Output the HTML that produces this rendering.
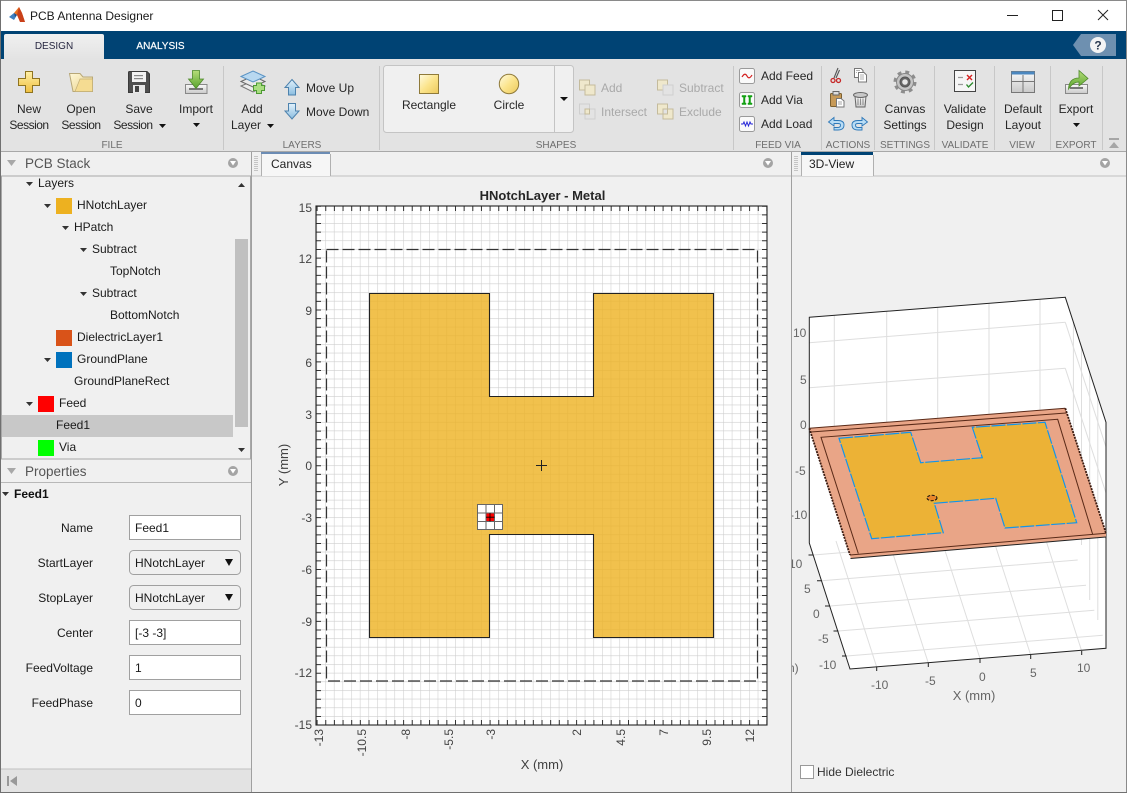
<!DOCTYPE html>
<html><head><meta charset="utf-8"><title>PCB Antenna Designer</title>
<style>
html,body{margin:0;padding:0;background:#f0f0f0;overflow:hidden}
svg{display:block;font-family:"Liberation Sans",Arial,sans-serif;font-size:12px}
.r{font-size:12px;fill:#262626;text-anchor:middle}
.ss{letter-spacing:-.5px}
.l{font-size:12px;fill:#262626}
.d{font-size:12px;fill:#a9a9a9}
.s{font-size:10px;fill:#6e6e6e;text-anchor:middle}
.t{fill:#1a1a1a}
.p{fill:#1a1a1a;text-anchor:end}
.v{fill:#1a1a1a}
.h{font-size:13.5px;fill:#555}
.a{fill:#444;text-anchor:end}
.x{fill:#444;text-anchor:end}
.z{fill:#666}
.sep{stroke:#c8c8c8;stroke-width:1}
</style></head><body>
<svg width="1127" height="793" viewBox="0 0 1127 793" xmlns="http://www.w3.org/2000/svg">
<defs>
<linearGradient id="gy" x1="0" y1="0" x2="1" y2="1"><stop offset="0" stop-color="#fffbe0"/><stop offset=".5" stop-color="#fbe48c"/><stop offset="1" stop-color="#ecc95c"/></linearGradient>
<linearGradient id="gp" x1="0" y1="0" x2="0" y2="1"><stop offset="0" stop-color="#fff0a8"/><stop offset="1" stop-color="#f0bf40"/></linearGradient>
<linearGradient id="gf" x1="0" y1="0" x2="1" y2="1"><stop offset="0" stop-color="#fff8d8"/><stop offset="1" stop-color="#e8cf85"/></linearGradient>
<linearGradient id="gg" x1="0" y1="0" x2="0" y2="1"><stop offset="0" stop-color="#b6dd7a"/><stop offset="1" stop-color="#58a32c"/></linearGradient>
<linearGradient id="gb" x1="0" y1="0" x2="0" y2="1"><stop offset="0" stop-color="#e2f1fb"/><stop offset="1" stop-color="#8bbde0"/></linearGradient>
<linearGradient id="gt" x1="0" y1="0" x2="0" y2="1"><stop offset="0" stop-color="#fafafa"/><stop offset="1" stop-color="#c9c9c9"/></linearGradient>
<linearGradient id="gtab" x1="0" y1="0" x2="0" y2="1"><stop offset="0" stop-color="#f0f0f0"/><stop offset="1" stop-color="#e3e3e3"/></linearGradient>
<pattern id="grid" patternUnits="userSpaceOnUse" x="316.6" y="205.7" width="8.65" height="8.65">
<path d="M0 0V8.65M0 0H8.65" stroke="#cdcdcd" stroke-width="1.100" fill="none"/>
</pattern>
<clipPath id="rv"><rect x="792" y="176" width="334" height="616"/></clipPath>
</defs>

<!-- window -->
<rect width="1127" height="793" fill="#f0f0f0"/>
<rect width="1127" height="31" fill="#fff"/>
<rect y="0" width="1127" height="1" fill="#8a8a8a"/>

<!-- logo -->
<polygon points="9,17 14,13 17,15 14,20" fill="#3d7fc0"/>
<polygon points="14,13 19,7 22,13 25,22 21,18 17,15" fill="#e8701e"/>
<polygon points="19,7 17,15 20,22 25,22 22,13" fill="#c9401a"/>
<polygon points="14,13 17,15 15,17" fill="#1e4f8a"/>
<text x="30" y="20" style="fill:#1a1a1a">PCB Antenna Designer</text>

<!-- window controls -->
<rect x="1007" y="15" width="11" height="1" fill="#222"/>
<rect x="1052.500" y="10.500" width="10" height="10" fill="none" stroke="#222"/>
<path d="M1098 10L1108 20M1108 10L1098 20" stroke="#222" fill="none"/>

<!-- blue strip -->
<rect y="31" width="1127" height="28" fill="#004374"/>
<path d="M4 59V36Q4 34 6 34H102Q104 34 104 36V59Z" fill="url(#gtab)"/>
<text x="54" y="49" text-anchor="middle" style="font-size:10px;fill:#262640">DESIGN</text>
<text x="160.500" y="49" text-anchor="middle" style="font-size:10px;fill:#fff;stroke:#fff;stroke-width:.2">ANALYSIS</text>
<polygon points="1073,45 1081,34 1116,34 1116,56 1081,56" fill="#6e90b0"/>
<circle cx="1098" cy="45" r="8" fill="#f4f4f4"/>
<text x="1098" y="49.500" text-anchor="middle" style="font-size:12px;font-weight:bold;fill:#2a3a50">?</text>

<!-- ribbon -->
<rect y="59" width="1127" height="92" fill="#e3e3e3"/>
<rect y="151" width="1127" height="1" fill="#a8a8a8"/>
<g class="sep">
<line x1="223.500" y1="66" x2="223.500" y2="150"/><line x1="379.500" y1="66" x2="379.500" y2="150"/>
<line x1="733.500" y1="66" x2="733.500" y2="150"/><line x1="821.500" y1="66" x2="821.500" y2="150"/>
<line x1="874.500" y1="66" x2="874.500" y2="150"/><line x1="934.500" y1="66" x2="934.500" y2="150"/>
<line x1="994.500" y1="66" x2="994.500" y2="150"/><line x1="1050.500" y1="66" x2="1050.500" y2="150"/>
<line x1="1102.500" y1="66" x2="1102.500" y2="150"/>
</g>

<!-- ribbon labels -->
<text class="r" x="29" y="113">New</text><text class="r ss" x="29" y="129">Session</text>
<text class="r" x="81" y="113">Open</text><text class="r ss" x="81" y="129">Session</text>
<text class="r" x="139" y="113">Save</text><text class="r ss" x="133" y="129">Session</text>
<polygon points="159,124 166,124 162.500,128" fill="#111"/>
<text class="r" x="196" y="113">Import</text>
<polygon points="193,123 200,123 196.500,127" fill="#111"/>
<text class="r" x="252" y="113">Add</text><text class="r" x="246" y="129">Layer</text>
<polygon points="267,124 274,124 270.500,128" fill="#111"/>
<text class="l" x="306" y="92">Move Up</text><text class="l" x="306" y="116">Move Down</text>
<text class="s" x="112" y="148">FILE</text><text class="s" x="302" y="148">LAYERS</text>
<text class="s" x="556" y="148">SHAPES</text><text class="s" x="778" y="148">FEED VIA</text>
<text class="s" x="848" y="148">ACTIONS</text><text class="s" x="905" y="148">SETTINGS</text>
<text class="s" x="965" y="148">VALIDATE</text><text class="s" x="1022" y="148">VIEW</text>
<text class="s" x="1076" y="148">EXPORT</text>

<!-- New Session icon -->
<path d="M25.500 71.500H32.500V78.500H39.500V85.500H32.500V92.500H25.500V85.500H18.500V78.500H25.500Z" fill="url(#gp)" stroke="#8f7420"/>
<!-- Open icon -->
<path d="M69.500 73.500H80L83 77H92.500V91.500H73Z" fill="url(#gf)" stroke="#b8a878"/>
<path d="M80 79H92.500V91.500H75Z" fill="#f5dc92" stroke="#c2ae76" stroke-width=".7"/>
<!-- Save icon -->
<path d="M128.500 72.500Q128.500 71.500 129.500 71.500H147L149.500 74V92.500H128.500Z" fill="#4f4f4f" stroke="#3a3a3a"/>
<rect x="132" y="72" width="14" height="10" fill="#f2f2f2"/>
<rect x="134" y="75" width="9" height="1.200" fill="#888"/><rect x="134" y="78" width="9" height="1.200" fill="#888"/>
<rect x="133" y="85" width="12" height="8" fill="#e8e8e8"/><rect x="135" y="86" width="4" height="6" fill="#444"/>
<!-- Import icon -->
<path d="M185.500 84.500H207V93.500H185.500Z" fill="url(#gt)" stroke="#888"/>
<rect x="189" y="88" width="14" height="2" fill="#777"/>
<path d="M192.500 70.500H199.500V79H203.500L196 88.500L188.500 79H192.500Z" fill="url(#gg)" stroke="#4e8a2a" stroke-width=".8"/>
<!-- Add layer icon -->
<path d="M241 86L253 81L265 86L253 92Z" fill="#ececec" stroke="#777"/>
<path d="M241 81.500L253 76L265 81.500L253 87Z" fill="#e9e9e9" stroke="#666"/>
<path d="M241 76.500L253 71L265 76.500L253 82Z" fill="#b8d8f0" stroke="#5a93c4"/>
<path d="M256.500 83H261.500V85.500H264.500V90.500H261.500V93.500H256.500V90.500H253.500V85.500H256.500Z" fill="#a9dd80" stroke="#4d9a34"/>
<!-- Move arrows -->
<path d="M292 79.500L299 87.500H295.500V95H288.500V87.500H285Z" fill="url(#gb)" stroke="#4d82ad"/>
<path d="M288.500 103.500H295.500V111H299L292 119L285 111H288.500Z" fill="url(#gb)" stroke="#4d82ad"/>

<!-- Shapes gallery -->
<rect x="383.500" y="65.500" width="190" height="67" rx="3" fill="#f0f0f0" stroke="#c4c4c4"/>
<line x1="554.500" y1="66" x2="554.500" y2="132" stroke="#c4c4c4"/>
<rect x="419.500" y="74.500" width="19" height="19" fill="url(#gy)" stroke="#8f7a3a"/>
<circle cx="509" cy="84" r="9.700" fill="url(#gy)" stroke="#8f7a3a"/>
<text x="429" y="109" text-anchor="middle" class="l">Rectangle</text>
<text x="509" y="109" text-anchor="middle" class="l">Circle</text>
<polygon points="560,97 568,97 564,101" fill="#111"/>

<!-- disabled boolean ops -->
<g stroke="#c4bb9c" fill="#efe8cc">
<rect x="579.500" y="80" width="10" height="10"/><rect x="585" y="85" width="10" height="10"/>
<rect x="657.500" y="80" width="10" height="10"/><rect x="663" y="85" width="10" height="10" fill="#e3e3e3" stroke="#cfcfcf"/>
<rect x="579.500" y="104" width="10" height="10" fill="#e3e3e3" stroke="#cfcfcf"/><rect x="585" y="109" width="10" height="10" fill="#e3e3e3" stroke="#cfcfcf"/><rect x="585" y="109" width="4.500" height="5"/>
<rect x="657.500" y="104" width="10" height="10"/><rect x="663" y="109" width="10" height="10"/><rect x="663" y="109" width="4.500" height="5" fill="#e3e3e3"/>
</g>
<text class="d" x="601" y="92">Add</text><text class="d" x="601" y="116">Intersect</text>
<text class="d" x="679" y="92">Subtract</text><text class="d" x="679" y="116">Exclude</text>

<!-- Feed/via/load -->
<rect x="739.500" y="68.500" width="15" height="15" rx="2" fill="#fafafa" stroke="#9a9a9a"/>
<path d="M742 77Q745 72 747 76T752 75" fill="none" stroke="#d42020" stroke-width="1.200"/>
<rect x="739.500" y="92.500" width="15" height="15" rx="2" fill="#fafafa" stroke="#9a9a9a"/>
<path d="M742 95.500H746V97H745V103H746V104.500H742V103H743.500V97H742ZM748 95.500H752V97H750.500V103H752V104.500H748V103H749V97H748Z" fill="#12a012" stroke="#12a012" stroke-width=".5"/>
<rect x="739.500" y="116.500" width="15" height="15" rx="2" fill="#fafafa" stroke="#9a9a9a"/>
<path d="M741 124H743L744 122L745.500 126L747 122L748.500 126L750 122L751 124H753" fill="none" stroke="#2626d8" stroke-width="1"/>
<text class="l" x="761" y="80">Add Feed</text><text class="l" x="761" y="104">Add Via</text><text class="l" x="761" y="128">Add Load</text>

<!-- Actions -->
<path d="M838 68L834 78M839.500 70L836 78" stroke="#555" stroke-width="1.100" fill="none"/>
<circle cx="833" cy="80.500" r="2" fill="none" stroke="#c62828" stroke-width="1.300"/><circle cx="838.500" cy="80.500" r="2" fill="none" stroke="#c62828" stroke-width="1.300"/>
<path d="M854.500 68.500H861L863 70.500V77.500H854.500Z" fill="#fff" stroke="#777"/><path d="M858.500 72.500H864L866.500 75V82H858.500Z" fill="#fff" stroke="#777"/>
<path d="M856 70.500H860M856 72.500H857M860 75H864M860 77H864M860 79H864" stroke="#999" fill="none" stroke-width=".8"/>
<rect x="830.500" y="93.500" width="11" height="13" rx="1" fill="#c79a58" stroke="#7c6030"/><rect x="833" y="91.500" width="6" height="3.500" fill="#ddd" stroke="#666"/>
<path d="M836.500 98.500H841L844 101V107H836.500Z" fill="#fff" stroke="#777"/><path d="M838 102H842M838 104H842" stroke="#888" stroke-width=".8"/>
<path d="M855 96H866L865 107H856Z" fill="url(#gt)" stroke="#666"/><ellipse cx="860.500" cy="95" rx="7" ry="2.500" fill="#c8c8c8" stroke="#666"/>
<path d="M858 98.500V105M860.500 98.500V105M863 98.500V105" stroke="#777" stroke-width=".8"/>
<path d="M834 117.500V120.500H838Q844 120.500 844 125Q844 130 838 130H834V127.500H838Q840.500 127.500 840.500 125Q840.500 123.500 838 123.500H834V126L828.500 122Z" fill="#b8dcf5" stroke="#2e78b8" stroke-width=".9"/>
<path d="M862 117.500V120.500H858Q852 120.500 852 125Q852 130 858 130H862V127.500H858Q855.500 127.500 855.500 125Q855.500 123.500 858 123.500H862V126L867.500 122Z" fill="#b8dcf5" stroke="#2e78b8" stroke-width=".9"/>

<!-- Gear -->
<circle cx="905" cy="82" r="10" fill="none" stroke="#8d8d8d" stroke-width="3" stroke-dasharray="3.900 3.950"/>
<circle cx="905" cy="82" r="8.500" fill="#c4c4c4" stroke="#888"/>
<circle cx="905" cy="82" r="5" fill="#666" stroke="#555"/><circle cx="905" cy="82" r="2.800" fill="#e6e6e6"/>
<text class="r" x="905" y="113">Canvas</text><text class="r" x="905" y="129">Settings</text>

<!-- Validate -->
<rect x="954.500" y="70.500" width="21" height="21" fill="#f6f6f6" stroke="#444"/>
<path d="M958 77.500H963M958 84.500H963" stroke="#999" stroke-width="1.300"/>
<path d="M967 75L972 80M972 75L967 80" stroke="#d62020" stroke-width="1.400"/>
<path d="M966.500 84.500L968.500 87L973 82.500" stroke="#2e8b2e" stroke-width="1.400" fill="none"/>
<text class="r" x="965" y="113">Validate</text><text class="r" x="965" y="129">Design</text>

<!-- Layout -->
<rect x="1011.500" y="71.500" width="23" height="21" fill="url(#gt)" stroke="#777"/>
<rect x="1011.500" y="71.500" width="23" height="3" fill="#4c88c0"/>
<path d="M1012 81.500H1034M1023 75V92" stroke="#777"/>
<text class="r" x="1023" y="113">Default</text><text class="r" x="1023" y="129">Layout</text>

<!-- Export -->
<rect x="1065.500" y="84.500" width="22" height="9" fill="url(#gt)" stroke="#888"/>
<rect x="1070" y="87" width="13" height="2" fill="#777"/>
<path d="M1068.500 89Q1069 78 1079 78V70.500L1088 78.500L1079 86V82Q1073 82 1068.500 89Z" fill="url(#gg)" stroke="#4e8a2a" stroke-width=".8"/>
<text class="r" x="1076" y="113">Export</text>
<polygon points="1073,123 1080,123 1076.500,127" fill="#111"/>

<!-- collapse -->
<rect x="1109" y="138" width="10" height="2" fill="#a6a6a6"/><polygon points="1109,148 1119,148 1114,142" fill="#a6a6a6"/>

<!-- Left panel -->
<rect x="251" y="152" width="1" height="641" fill="#a0a0a0"/>
<polygon points="7,160 16,160 11.500,166" fill="#a8a8a8"/>
<text class="h" x="25" y="168">PCB Stack</text>
<circle cx="233" cy="163" r="5" fill="#a4a4a4"/><polygon points="230,161 236,161 233,165.500" fill="#fff"/>
<rect x="1.500" y="176" width="249" height="283" fill="#f0f0f0" stroke="#a8a8a8"/>
<rect x="235" y="239" width="13" height="188" fill="#c0c0c0"/>
<polygon points="238,187 245,187 241.500,183" fill="#333"/><polygon points="238,448 245,448 241.500,452" fill="#333"/>
<rect x="2" y="415" width="231" height="22" fill="#c8c8c8"/>
<g fill="#333">
<polygon points="26,182 33,182 29.500,186"/><polygon points="44,204 51,204 47.500,208"/><polygon points="62,226 69,226 65.500,230"/>
<polygon points="80,248 87,248 83.500,252"/><polygon points="80,292 87,292 83.500,296"/><polygon points="44,358 51,358 47.500,362"/><polygon points="26,402 33,402 29.500,406"/>
</g>
<rect x="56" y="198" width="16" height="16" fill="#edb120"/>
<rect x="56" y="330" width="16" height="16" fill="#d95319"/>
<rect x="56" y="352" width="16" height="16" fill="#0072bd"/>
<rect x="38" y="396" width="16" height="16" fill="#ff0000"/>
<rect x="38" y="440" width="16" height="16" fill="#00ff00"/>
<text class="t" x="38" y="187">Layers</text><text class="t" x="77" y="209">HNotchLayer</text><text class="t" x="74" y="231">HPatch</text>
<text class="t" x="92" y="253">Subtract</text><text class="t" x="110" y="275">TopNotch</text><text class="t" x="92" y="297">Subtract</text>
<text class="t" x="110" y="319">BottomNotch</text><text class="t" x="77" y="341">DielectricLayer1</text><text class="t" x="77" y="363">GroundPlane</text>
<text class="t" x="74" y="385">GroundPlaneRect</text><text class="t" x="59" y="407">Feed</text><text class="t" x="56" y="429">Feed1</text><text class="t" x="59" y="451">Via</text>

<!-- Properties -->
<polygon points="7,468 16,468 11.500,474" fill="#a8a8a8"/>
<text class="h" x="25" y="476">Properties</text>
<circle cx="233" cy="471" r="5" fill="#a4a4a4"/><polygon points="230,469 236,469 233,473.500" fill="#fff"/>
<rect x="1" y="482" width="250" height="1" fill="#b8b8b8"/>
<polygon points="2,492 9,492 5.500,496" fill="#333"/>
<text x="14" y="498" style="font-weight:bold;fill:#111">Feed1</text>
<text class="p" x="93" y="532">Name</text><text class="p" x="93" y="567">StartLayer</text><text class="p" x="93" y="602">StopLayer</text>
<text class="p" x="93" y="637">Center</text><text class="p" x="93" y="672">FeedVoltage</text><text class="p" x="93" y="707">FeedPhase</text>
<g fill="#fff" stroke="#a0a0a0">
<rect x="129.500" y="515.500" width="111" height="24"/>
<rect x="129.500" y="620.500" width="111" height="24"/>
<rect x="129.500" y="655.500" width="111" height="24"/>
<rect x="129.500" y="690.500" width="111" height="24"/>
</g>
<g fill="#f0f0f0" stroke="#a0a0a0">
<rect x="129.500" y="550.500" width="111" height="24" rx="4"/>
<rect x="129.500" y="585.500" width="111" height="24" rx="4"/>
</g>
<text class="v" x="135" y="532">Feed1</text><text class="v" x="135" y="567">HNotchLayer</text><text class="v" x="135" y="602">HNotchLayer</text>
<text class="v" x="135" y="637">[-3 -3]</text><text class="v" x="135" y="672">1</text><text class="v" x="135" y="707">0</text>
<polygon points="225,559 233,559 229,566" fill="#111"/><polygon points="225,594 233,594 229,601" fill="#111"/>
<rect x="1" y="769" width="250" height="23" fill="#e3e3e3"/><rect x="1" y="768.500" width="250" height="1" fill="#c0c0c0"/>
<rect x="7" y="776" width="2" height="10" fill="#999"/><polygon points="17,776 17,786 10,781" fill="#999"/>

<!-- center panel tabs -->
<g stroke="#999" stroke-width="1" stroke-dasharray="1 1">
<line x1="255" y1="156" x2="255" y2="172"/><line x1="257" y1="156" x2="257" y2="172"/>
<line x1="795" y1="156" x2="795" y2="172"/><line x1="797" y1="156" x2="797" y2="172"/>
</g>
<rect x="252" y="175.500" width="875" height="1" fill="#c0c0c0"/>
<rect x="261" y="152" width="69" height="24" fill="#f6f6f6"/>
<rect x="261" y="152" width="69" height="2" fill="#6c8cb4"/>
<path d="M261.500 154V176M330.500 154V176" stroke="#b0b0b0"/>
<text x="271" y="168" style="fill:#222">Canvas</text>
<circle cx="768" cy="163" r="5" fill="#a4a4a4"/><polygon points="765,161 771,161 768,165.500" fill="#fff"/>
<rect x="791" y="152" width="1" height="641" fill="#a0a0a0"/>
<rect x="801" y="152" width="72" height="24" fill="#f6f6f6"/>
<rect x="801" y="152" width="72" height="3" fill="#004374"/>
<path d="M801.500 155V176M873.500 155V176" stroke="#b0b0b0"/>
<text x="809" y="168" style="fill:#222">3D-View</text>
<circle cx="1105" cy="163" r="5" fill="#a4a4a4"/><polygon points="1102,161 1108,161 1105,165.500" fill="#fff"/>

<!-- Canvas plot -->
<text x="542.500" y="200" text-anchor="middle" style="font-size:13px;font-weight:bold;fill:#262626">HNotchLayer - Metal</text>
<rect x="316" y="206" width="451" height="519" fill="#fff"/>
<rect x="316" y="206" width="451" height="519" fill="url(#grid)"/>
<path d="M369.500 293.500H489.500V396.500H593.500V293.500H713.500V637.500H593.500V534.500H489.500V637.500H369.500Z" fill="#edb120" fill-opacity=".8" stroke="#222" stroke-width="1.100"/>
<rect x="326.500" y="249.500" width="431" height="431.500" fill="none" stroke="#333" stroke-width="1.200" stroke-dasharray="12 4"/>
<!-- ticks -->
<g stroke="#333" fill="none">
<line x1="316.600" y1="208.500" x2="767" y2="208.500" stroke-width="5" stroke-dasharray="1 7.650"/>
<line x1="316.600" y1="722.500" x2="767" y2="722.500" stroke-width="5" stroke-dasharray="1 7.650"/>
<line x1="318.500" y1="205.700" x2="318.500" y2="725" stroke-width="5" stroke-dasharray="1 7.650"/>
<line x1="764.500" y1="205.700" x2="764.500" y2="725" stroke-width="5" stroke-dasharray="1 7.650"/>
</g>
<rect x="316" y="206" width="451" height="519" fill="none" stroke="#222" stroke-width="1.100"/>
<!-- feed marker -->
<rect x="477.500" y="504.500" width="25" height="25" fill="#fff"/>
<rect x="486" y="513" width="8.500" height="8.500" fill="#f00"/>
<path d="M477.500 504.500H502.500V529.500H477.500ZM486 504.500V529.500M494.500 504.500V529.500M477.500 513H502.500M477.500 521.500H502.500" fill="none" stroke="#666" stroke-width="1"/>
<path d="M490 513V521.500M486 517.200H494.500" stroke="#000" stroke-width=".8" fill="none"/>
<path d="M541.500 460V471M536 465.500H547" stroke="#222" fill="none"/>
<!-- y tick labels -->
<g>
<text class="a" x="312" y="212">15</text><text class="a" x="312" y="263">12</text><text class="a" x="312" y="315">9</text>
<text class="a" x="312" y="367">6</text><text class="a" x="312" y="419">3</text><text class="a" x="312" y="470">0</text>
<text class="a" x="312" y="522">-3</text><text class="a" x="312" y="574">-6</text><text class="a" x="312" y="626">-9</text>
<text class="a" x="312" y="677">-12</text><text class="a" x="312" y="729">-15</text>
</g>
<g>
<text class="x" transform="translate(323,729) rotate(-90)">-13</text>
<text class="x" transform="translate(366,729) rotate(-90)">-10.5</text>
<text class="x" transform="translate(410,729) rotate(-90)">-8</text>
<text class="x" transform="translate(453,729) rotate(-90)">-5.5</text>
<text class="x" transform="translate(495,729) rotate(-90)">-3</text>
<text class="x" transform="translate(581,729) rotate(-90)">2</text>
<text class="x" transform="translate(625,729) rotate(-90)">4.5</text>
<text class="x" transform="translate(668,729) rotate(-90)">7</text>
<text class="x" transform="translate(711,729) rotate(-90)">9.5</text>
<text class="x" transform="translate(754,729) rotate(-90)">12</text>
</g>
<text transform="translate(288,465) rotate(-90)" text-anchor="middle" style="font-size:13px;fill:#404040">Y (mm)</text>
<text x="542" y="769" text-anchor="middle" style="font-size:13px;fill:#404040">X (mm)</text>

<!-- 3D view -->
<polygon points="809.300,317.300 1065.300,297.300 1106,422.300 1106,648.300 850,669 809.300,543" fill="#fff"/>
<g stroke="#dedede" fill="none">
<!-- back wall -->
<path d="M809.300,342.700L1065.300,322.300M809.300,387.700L1065.300,368.300M834.300,315.300V440M886.700,311.300V440M937.700,307.300V440M989,303.300V440M1040,299.300V440"/>
<!-- right wall -->
<path d="M1065.300,322.300L1106,447M1065.300,368.300L1106,493M1065.300,414L1106,539"/>
<path d="M1073.400,322.300V540M1081.500,347V545M1089.700,372V600M1097.800,397V620"/>
<!-- floor -->
<path d="M876.700,667L836,541M928.300,663L887.600,537M980,658.500L939.300,533M1030.700,655L990,529M1081.700,651L1041,525"/>
<path d="M813.300,555L1069.300,534.300M821.700,580.700L1077.700,560M830,606L1086,585.300M838.300,631L1094.300,610.300M846.700,656L1102.700,635.300"/>
</g>
<!-- axes -->
<g stroke="#222" fill="none" stroke-width="1">
<path d="M809.300,317.300L1065.300,297.300L1106,422.300V648.300L850,669L809.300,543ZM809.300,317.300V543"/>
<path d="M876.700,667V671M928.300,663V667M980,658.500V663M1030.700,655V659M1081.700,651V655M813.300,555H808.500M821.700,580.700H817M830,606H825M838.300,631H833.500M846.700,656H842"/>
</g>
<!-- plate -->
<polygon points="809.300,428.300 1065.300,408.300 1106,533.300 1106,537 850.700,558.500 850,555" fill="#e9a587"/>
<polygon points="809.300,428.300 1065.300,408.300 1106,533.300 850,555" fill="#e9a587"/>
<path d="M809.300,428.300L1065.300,408.300M850,555L1106,533.300M811,432L1066,413" fill="none" stroke="#5a2a18" stroke-width="1"/>
<path d="M809.300,428.300L850,555M1065.300,408.300L1106,533.300" fill="none" stroke="#3a1a10" stroke-width="1.800" stroke-dasharray="2 1"/>
<path d="M850.500,558.500L1106,537" stroke="#222" fill="none"/>
<path d="M858.300,553.500L821,437.300L1057.700,419.300L1092.700,534.500" fill="none" stroke="#5a2a18"/>
<polygon points="839,438.300 910.700,432.300 920.700,462.700 982.300,457.700 972.300,427.300 1045,422.300 1076.700,522.700 1005,528 995.700,498.300 934.300,503.300 943.300,532.700 871.700,538.700" fill="#ecb236"/>
<polygon points="839,438.300 910.700,432.300 920.700,462.700 982.300,457.700 972.300,427.300 1045,422.300 1076.700,522.700 1005,528 995.700,498.300 934.300,503.300 943.300,532.700 871.700,538.700" fill="none" stroke="#1295ea" stroke-width="1.200" stroke-dasharray="14 1.500"/>
<ellipse cx="932" cy="498" rx="5" ry="2.700" fill="#e8862a" stroke="#111" stroke-dasharray="3 1.500"/>
<!-- 3D labels -->
<g class="z" clip-path="url(#rv)">
<text x="793" y="337">10</text><text x="800" y="384">5</text><text x="800" y="429">0</text>
<text x="795" y="475">-5</text><text x="790" y="519">-10</text>
<text x="789" y="568">10</text><text x="804" y="593">5</text><text x="813" y="618">0</text><text x="818" y="643">-5</text><text x="819" y="669">-10</text>
<text x="788" y="672">n)</text>
<text x="871" y="689">-10</text><text x="925" y="685">-5</text><text x="979" y="681">0</text><text x="1030" y="677">5</text><text x="1077" y="672">10</text>
</g>
<text x="974" y="700" text-anchor="middle" style="font-size:13px;fill:#666">X (mm)</text>

<rect x="800.500" y="765.500" width="13" height="13" fill="#fff" stroke="#999"/>
<text x="817" y="776" style="fill:#333">Hide Dielectric</text>

<!-- window frame -->
<rect x="0" y="0" width="1" height="793" fill="#707070"/>
<rect x="1126" y="0" width="1" height="793" fill="#8a8a8a"/>
<rect x="0" y="792" width="1127" height="1" fill="#707070"/>
</svg>
</body></html>
